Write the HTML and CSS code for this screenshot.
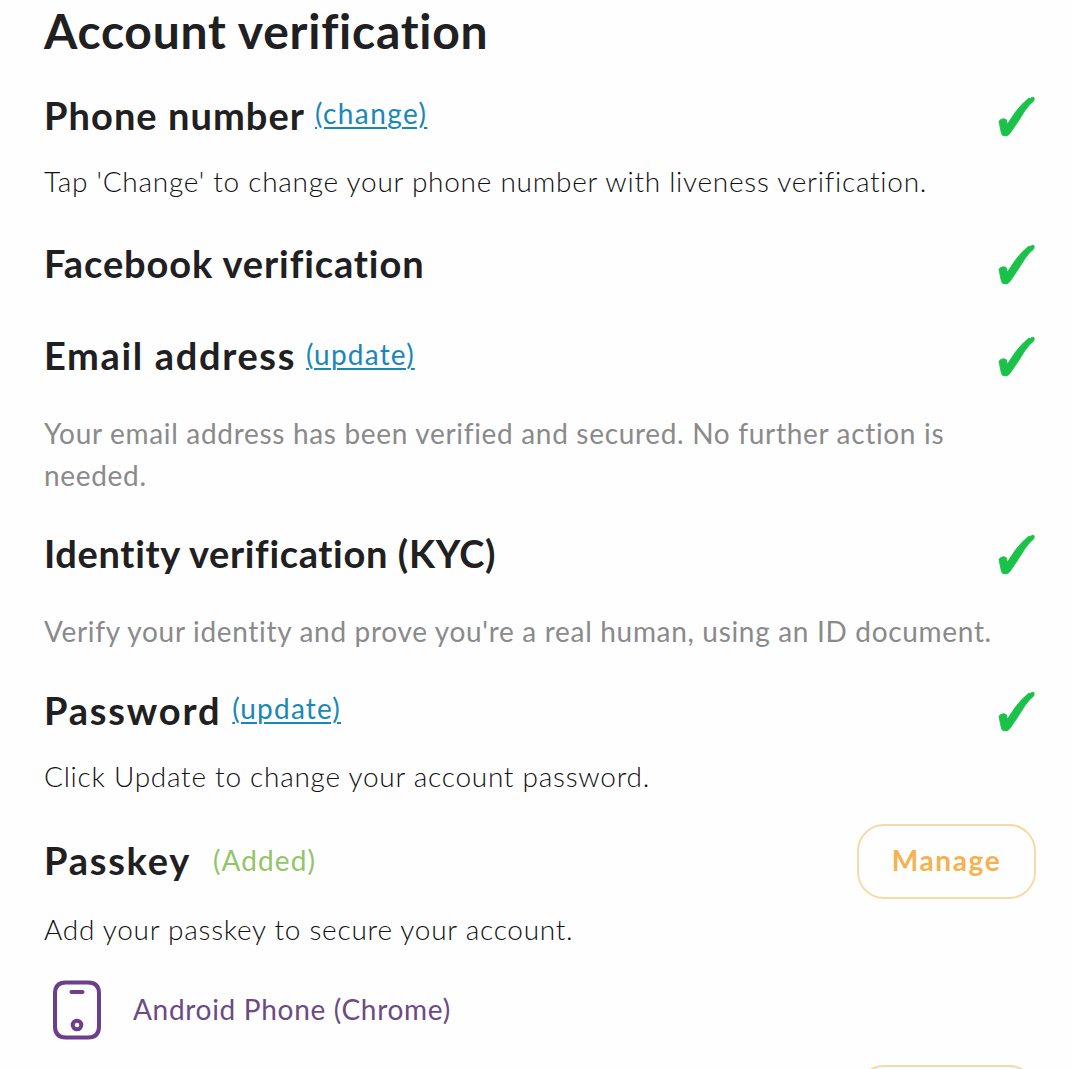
FILE: index.html
```html
<!DOCTYPE html>
<html lang="en">
<head>
    <meta charset="UTF-8">
    <meta name="viewport" content="width=device-width, initial-scale=1.0">
    <title>Account verification</title>
    <link rel="stylesheet" href="styles.css">
</head>
<body>
    <svg class="defs">
        <symbol id="check" viewBox="0 0 38 42">
            <path fill="#1bc24a" stroke="#1bc24a" stroke-width="0.900" stroke-linejoin="round" d="M1 25.500Q1.500 23.500 5.300 22.700Q8.500 22.700 8.700 25L9.300 28.300L17 16.700Q23 8.500 30.300 2.500L32.600 2.300L34.300 1.300Q36.500 1 36.200 2.700L35.700 5Q31 8.500 27 14.500L18.700 27.600L11.500 38Q10 40 7 39.900Q4 40 3.500 37.500Z"/>
        </symbol>
    </svg>

    <main class="page">
        <h1>Account verification</h1>

        <section class="phone">
            <div class="row">
                <h2>Phone number</h2>
                <a href="#">(change)</a>
                <svg class="check"><use href="#check"/></svg>
            </div>
            <p>Tap 'Change' to change your phone number with liveness verification.</p>
        </section>

        <section class="facebook">
            <div class="row">
                <h2>Facebook verification</h2>
                <svg class="check"><use href="#check"/></svg>
            </div>
        </section>

        <section class="email">
            <div class="row">
                <h2>Email address</h2>
                <a href="#">(update)</a>
                <svg class="check"><use href="#check"/></svg>
            </div>
            <p class="muted">Your email address has been verified and secured. No further action is needed.</p>
        </section>

        <section class="identity">
            <div class="row">
                <h2>Identity verification (KYC)</h2>
                <svg class="check"><use href="#check"/></svg>
            </div>
            <p class="muted">Verify your identity and prove you're a real human, using an ID document.</p>
        </section>

        <section class="password">
            <div class="row">
                <h2>Password</h2>
                <a href="#">(update)</a>
                <svg class="check"><use href="#check"/></svg>
            </div>
            <p>Click Update to change your account password.</p>
        </section>

        <section class="passkey">
            <div class="row">
                <h2>Passkey</h2>
                <span class="added">(Added)</span>
                <button class="btn">Manage</button>
            </div>
            <p>Add your passkey to secure your account.</p>
            <div class="device">
                <svg width="48" height="60" viewBox="0 0 48 60" fill="none" stroke="#6b3f8c" stroke-width="4" stroke-linecap="round">
                    <path d="M13 2.500H35Q46 2.500 46 13.500V46.500Q46 57.500 35 57.500H13Q2 57.500 2 46.500V13.500Q2 2.500 13 2.500Z"/>
                    <path d="M18.500 12H29.500"/>
                    <circle cx="24" cy="45" r="4.300"/>
                </svg>
                <span>Android Phone (Chrome)</span>
            </div>
        </section>

        <section class="next">
            <div class="row">
                <button class="btn"></button>
            </div>
        </section>
    </main>
</body>
</html>
```
FILE: styles.css
```css
body {
    margin: 0;
    background-color: #fefefe;
    color: #202022;
    font-family: Lato, sans-serif;
    font-size: 28px;
    line-height: 42px;
}
.defs {
    display: none;
}
.page {
    box-sizing: border-box;
    height: 100vh;
    padding: 2px 36px 0 44px;
    overflow: hidden;
}
h1 {
    margin: 0 0 32px;
    font-size: 48px;
    line-height: 58px;
    letter-spacing: 0.75px;
}
h2 {
    margin: 0;
    padding-bottom: 4px;
    font-size: 38px;
    line-height: 44px;
    letter-spacing: 1.05px;
}
p {
    margin: 0;
    font-weight: 300;
    letter-spacing: 0.74px;
    color: #111;
}
.muted {
    font-weight: 400;
    letter-spacing: 0.68px;
    color: #8a8a8c;
}
.row {
    display: flex;
    align-items: center;
    height: 50px;
}
.check {
    width: 38px;
    height: 42px;
    margin-left: auto;
}
a {
    margin-left: 10px;
    padding-bottom: 9px;
    letter-spacing: 1.4px;
    color: #1a87b9;
    text-decoration-thickness: 2px;
    text-underline-offset: 3px;
}
.phone p {
    margin: 18px 0 38px;
}
.facebook {
    margin-bottom: 42px;
}
.facebook h2 {
    letter-spacing: 0.9px;
}
.email h2 {
    letter-spacing: 1.65px;
}
.email a {
    padding-bottom: 6px;
    letter-spacing: 1.2px;
}
.email p {
    margin: 30px 0 34px;
}
.identity h2 {
    letter-spacing: 0.65px;
}
.identity p {
    margin: 30px 0 35px;
}
.password h2 {
    letter-spacing: 1.8px;
}
.password a {
    margin-left: 11px;
    letter-spacing: 1.2px;
}
.password p {
    margin: 18px 0 27px;
}
.passkey .row, .next .row {
    height: 75px;
}
.passkey h2 {
    padding-bottom: 3px;
    letter-spacing: 1.75px;
}
.passkey p {
    margin: 9px 0 30px;
}
.added {
    margin-left: 22px;
    padding-bottom: 4px;
    letter-spacing: 1.1px;
    color: #92c56a;
}
.btn {
    width: 179px;
    height: 75px;
    margin-left: auto;
    padding: 0 0 4px;
    border: 2px solid #f5dba6;
    border-radius: 27px;
    background: none;
    color: #f4b350;
    font-family: inherit;
    font-size: 28px;
    font-weight: 700;
    letter-spacing: 1.6px;
}
.device {
    display: flex;
    align-items: center;
    gap: 32px;
    padding-left: 9px;
    color: #6b4a86;
    letter-spacing: 0.7px;
}
.device span {
    padding-bottom: 3px;
}
.next {
    margin-top: 25px;
}
```
